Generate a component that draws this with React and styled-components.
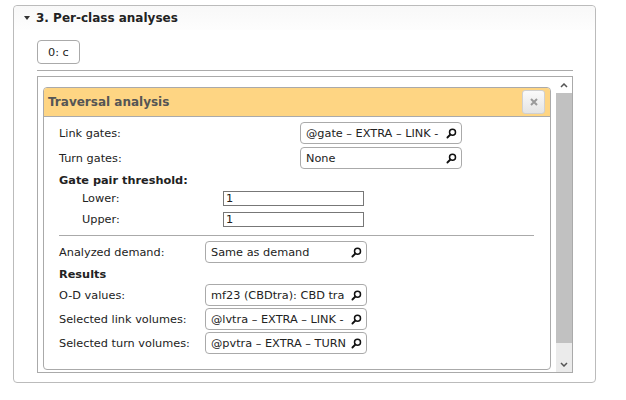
import React from 'react';
import styled, { createGlobalStyle } from 'styled-components';

const GlobalStyle = createGlobalStyle`
    body {
        margin: 0;
        background: #fff;
        font-family: "DejaVu Sans", Verdana, sans-serif;
        font-size: 11.3px;
        color: #222;
    }
`;

const Page = styled.div`
    padding: 5px 0 0 13px;
`;

const Panel = styled.div`
    width: 583px;
    height: 378px;
    box-sizing: border-box;
    border: 1px solid #bbb;
    border-radius: 4px;
`;

const PanelHeader = styled.div`
    display: flex;
    align-items: center;
    height: 24px;
    padding-left: 10px;
    gap: 6px;
    background: linear-gradient(#f8f8f8, #fdfdfd);
    border-radius: 4px 4px 0 0;
`;

const Caret = styled.span`
    width: 0;
    height: 0;
    border-left: 3.5px solid transparent;
    border-right: 3.5px solid transparent;
    border-top: 4px solid #333;
`;

const PanelTitle = styled.span`
    font-size: 12px;
    font-weight: bold;
    color: #222;
`;

const PanelBody = styled.div`
    padding: 10px 22px 0 23px;
`;

const Tab = styled.div`
    display: inline-flex;
    align-items: center;
    height: 24px;
    box-sizing: border-box;
    padding: 0 10px;
    border: 1px solid #aaa;
    border-radius: 4px;
`;

const TabLine = styled.div`
    margin-top: 6px;
    border-top: 1px solid #aaa;
`;

const ScrollFrame = styled.div`
    display: flex;
    margin-top: 5px;
    height: 297px;
    box-sizing: border-box;
    border: 1px solid #aaa;
`;

const ContentArea = styled.div`
    flex: 1;
    padding: 10px 5px 0 5px;
    overflow: hidden;
`;

const Card = styled.div`
    height: 283px;
    box-sizing: border-box;
    border: 1px solid #aaa;
    border-radius: 4px;
    overflow: hidden;
`;

const CardHeader = styled.div`
    display: flex;
    align-items: center;
    justify-content: space-between;
    height: 29px;
    box-sizing: border-box;
    padding: 0 5px 0 4px;
    background: #fed583;
    border-bottom: 1px solid #aaa;
`;

const CardTitle = styled.span`
    font-size: 12px;
    font-weight: bold;
    color: #555;
`;

const CloseButton = styled.div`
    display: flex;
    align-items: center;
    justify-content: center;
    width: 23px;
    height: 24px;
    box-sizing: border-box;
    border: 1px solid #d0d0d0;
    border-radius: 3px;
    background: linear-gradient(#fafafa, #e4e4e4);
`;

const CardBody = styled.div`
    padding: 5px 16px 0 15px;
`;

const FieldRow = styled.div`
    display: grid;
    grid-template-columns: ${p => p.$label}px auto;
    align-items: center;
    height: ${p => p.$h || 22}px;
    margin-top: ${p => p.$mt || 0}px;
    padding-left: ${p => p.$indent || 0}px;
`;

const Heading = styled.div`
    display: flex;
    align-items: center;
    height: 16px;
    margin-top: 3px;
    font-weight: bold;
`;

const Separator = styled.div`
    margin-top: 5px;
    border-top: 1px solid #aaa;
`;

const Lookup = styled.div`
    display: flex;
    align-items: center;
    gap: 1px;
    width: 162px;
    height: 22px;
    box-sizing: border-box;
    padding: 0 4px 0 5px;
    border: 1px solid #aaa;
    border-radius: 4px;
`;

const LookupValue = styled.span`
    flex: 1;
    white-space: nowrap;
`;

const NumberInput = styled.div`
    width: 141px;
    height: 15px;
    box-sizing: border-box;
    padding-left: 2px;
    border: 1px solid #777;
    line-height: 13px;
`;

const Scrollbar = styled.div`
    display: flex;
    flex-direction: column;
    width: 16px;
`;

const ScrollButton = styled.div`
    display: flex;
    align-items: center;
    justify-content: center;
    height: 16px;
    background: ${p => p.$bg};
`;

const Thumb = styled.div`
    height: 250px;
    background: #c1c1c1;
`;

const Track = styled.div`
    flex: 1;
    background: #ebebeb;
`;

const SearchIcon = () => (
    <svg width="11" height="11" viewBox="0 0 11 11">
        <circle cx="6.5" cy="4.3" r="3" fill="none" stroke="#111" strokeWidth="1.5" />
        <line x1="4.4" y1="6.5" x2="1.4" y2="9.5" stroke="#111" strokeWidth="1.8" strokeLinecap="round" />
    </svg>
);

const Chevron = ({ down }) => (
    <svg width="8" height="5" viewBox="0 0 8 5">
        <polyline
            points={down ? '1,1 4,4 7,1' : '1,4 4,1 7,4'}
            fill="none"
            stroke="#555"
            strokeWidth="1.5"
        />
    </svg>
);

const LookupField = ({ value }) => (
    <Lookup>
        <LookupValue>{value}</LookupValue>
        <SearchIcon />
    </Lookup>
);

export default function App() {
    return (
        <Page>
            <GlobalStyle />
            <Panel>
                <PanelHeader>
                    <Caret />
                    <PanelTitle>3. Per-class analyses</PanelTitle>
                </PanelHeader>
                <PanelBody>
                    <Tab>0: c</Tab>
                    <TabLine />
                    <ScrollFrame>
                        <ContentArea>
                            <Card>
                                <CardHeader>
                                    <CardTitle>Traversal analysis</CardTitle>
                                    <CloseButton>
                                        <svg width="8" height="8" viewBox="0 0 8 8">
                                            <path d="M1 1L7 7M7 1L1 7" stroke="#9a9a9a" strokeWidth="2" />
                                        </svg>
                                    </CloseButton>
                                </CardHeader>
                                <CardBody>
                                    <FieldRow $label={241}>
                                        <span>Link gates:</span>
                                        <LookupField value="@gate – EXTRA – LINK -" />
                                    </FieldRow>
                                    <FieldRow $label={241} $mt={3}>
                                        <span>Turn gates:</span>
                                        <LookupField value="None" />
                                    </FieldRow>
                                    <Heading>Gate pair threshold:</Heading>
                                    <FieldRow $label={141} $indent={23} $h={21}>
                                        <span>Lower:</span>
                                        <NumberInput>1</NumberInput>
                                    </FieldRow>
                                    <FieldRow $label={141} $indent={23} $h={21}>
                                        <span>Upper:</span>
                                        <NumberInput>1</NumberInput>
                                    </FieldRow>
                                    <Separator />
                                    <FieldRow $label={146} $mt={5}>
                                        <span>Analyzed demand:</span>
                                        <LookupField value="Same as demand" />
                                    </FieldRow>
                                    <Heading>Results</Heading>
                                    <FieldRow $label={146} $mt={2}>
                                        <span>O-D values:</span>
                                        <LookupField value="mf23 (CBDtra): CBD tra" />
                                    </FieldRow>
                                    <FieldRow $label={146} $mt={2}>
                                        <span>Selected link volumes:</span>
                                        <LookupField value="@lvtra – EXTRA – LINK -" />
                                    </FieldRow>
                                    <FieldRow $label={146} $mt={2}>
                                        <span>Selected turn volumes:</span>
                                        <LookupField value="@pvtra – EXTRA – TURN" />
                                    </FieldRow>
                                </CardBody>
                            </Card>
                        </ContentArea>
                        <Scrollbar>
                            <ScrollButton $bg="#fff"><Chevron /></ScrollButton>
                            <Thumb />
                            <Track />
                            <ScrollButton $bg="#ebebeb"><Chevron down /></ScrollButton>
                        </Scrollbar>
                    </ScrollFrame>
                </PanelBody>
            </Panel>
        </Page>
    );
}
